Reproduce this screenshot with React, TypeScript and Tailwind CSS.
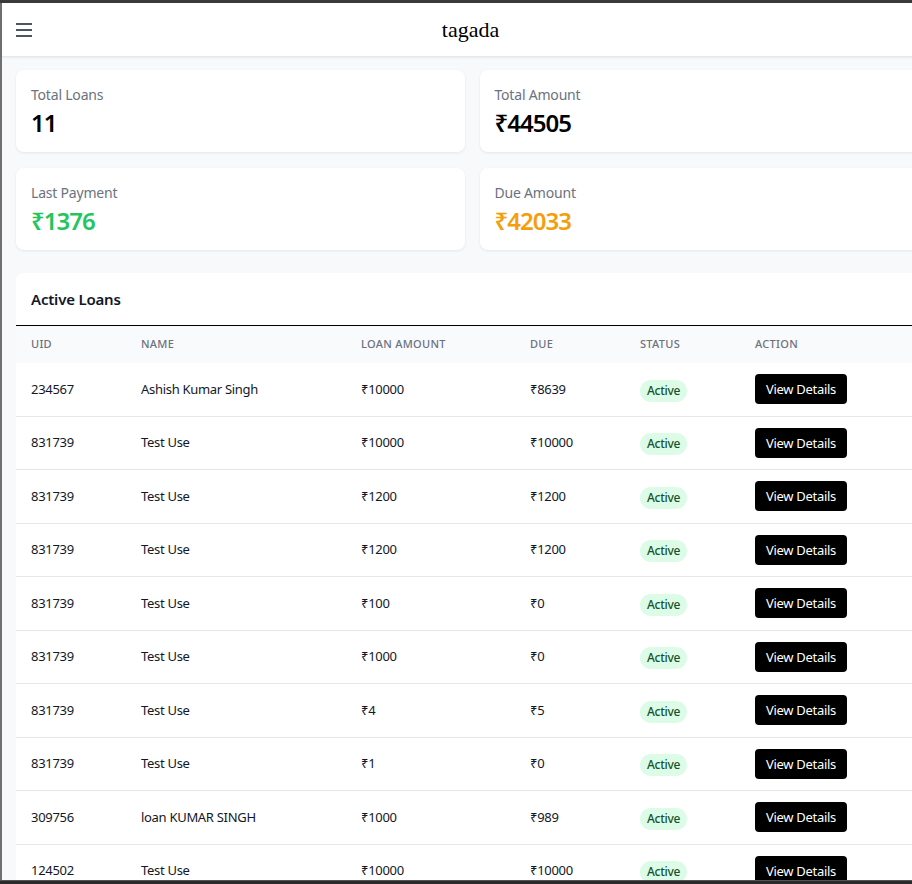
import React from 'react';

type Loan = {
    uid: string;
    name: string;
    amount: string;
    due: string;
};

const loans: Loan[] = [
    { uid: '234567', name: 'Ashish Kumar Singh', amount: '₹10000', due: '₹8639' },
    { uid: '831739', name: 'Test Use', amount: '₹10000', due: '₹10000' },
    { uid: '831739', name: 'Test Use', amount: '₹1200', due: '₹1200' },
    { uid: '831739', name: 'Test Use', amount: '₹1200', due: '₹1200' },
    { uid: '831739', name: 'Test Use', amount: '₹100', due: '₹0' },
    { uid: '831739', name: 'Test Use', amount: '₹1000', due: '₹0' },
    { uid: '831739', name: 'Test Use', amount: '₹4', due: '₹5' },
    { uid: '831739', name: 'Test Use', amount: '₹1', due: '₹0' },
    { uid: '309756', name: 'loan KUMAR SINGH', amount: '₹1000', due: '₹989' },
    { uid: '124502', name: 'Test Use', amount: '₹10000', due: '₹10000' },
];

const stats = [
    { label: 'Total Loans', value: '11', color: 'text-black' },
    { label: 'Total Amount', value: '₹44505', color: 'text-black' },
    { label: 'Last Payment', value: '₹1376', color: 'text-[#22c55e]' },
    { label: 'Due Amount', value: '₹42033', color: 'text-[#f59e0b]' },
];

const cols = 'grid grid-cols-[110px_220px_169px_110px_115px_1fr] pl-[15px] items-center';

const StatCard = ({ label, value, color }: { label: string; value: string; color: string }) => (
    <div className="bg-white rounded-lg shadow-[0_1px_3px_rgba(0,0,0,0.08)] px-[15px] pt-[15px] pb-[13px]">
        <p className="text-[14px] leading-5 text-[#6b7280] tracking-[-0.2px]">{label}</p>
        <p className={`mt-[2px] text-2xl leading-8 font-semibold tracking-[-1px] ${color}`}>{value}</p>
    </div>
);

export default function App() {
    return (
        <div className="w-[912px] h-[884px] overflow-hidden flex flex-col bg-[#3a3a3a] font-['Noto_Sans',sans-serif]">
            <div className="h-[3px] shrink-0 bg-[#3a3a3a]" />
            <div className="flex flex-1 min-h-0 overflow-hidden">
                <div className="w-[2px] shrink-0 bg-[#707070]" />
                <div className="w-[942px] shrink-0 bg-[#f8f9fb] flex flex-col">
                    <header className="h-[54px] shrink-0 bg-white border-b border-[#e5e7eb] shadow-[0_1px_2px_rgba(0,0,0,0.06)] flex items-center">
                        <button className="ml-[14px] w-4 h-4 flex items-center">
                            <svg width="16" height="14" viewBox="0 0 16 14">
                                <rect x="0" y="0" width="16" height="2" fill="#4b5563" />
                                <rect x="0" y="6" width="16" height="2" fill="#4b5563" />
                                <rect x="0" y="12" width="16" height="2" fill="#4b5563" />
                            </svg>
                        </button>
                        <h1 className="flex-1 text-center pr-[35px] text-[22px] text-black font-['Liberation_Serif',serif]">
                            tagada
                        </h1>
                    </header>

                    <main className="pl-[14px] pr-4 pt-[13px]">
                        <div className="grid grid-cols-2 gap-x-[15px] gap-y-4">
                            {stats.map((s) => (
                                <StatCard key={s.label} {...s} />
                            ))}
                        </div>

                        <div className="mt-[23px] bg-white rounded-t-lg">
                            <div className="px-[15px] h-[53px] flex items-center border-b border-black">
                                <h2 className="text-[15px] font-semibold text-[#111827] tracking-[-0.2px]">Active Loans</h2>
                            </div>
                            <div className={`${cols} h-[37px] bg-[#f9fafb] text-[11px] font-medium uppercase tracking-[0.3px] text-[#6b7280]`}>
                                <span>UID</span>
                                <span>Name</span>
                                <span>Loan Amount</span>
                                <span>Due</span>
                                <span>Status</span>
                                <span>Action</span>
                            </div>
                            {loans.map((loan, index) => (
                                <div
                                    key={`loan-${index}`}
                                    className={`${cols} h-[53.5px] border-b border-[#e5e7eb] text-[13px] text-[#111827] tracking-[-0.3px]`}
                                >
                                    <span>{loan.uid}</span>
                                    <span>{loan.name}</span>
                                    <span>{loan.amount}</span>
                                    <span>{loan.due}</span>
                                    <span>
                                        <span className="inline-block mt-[3px] px-[7px] py-[3px] rounded-full bg-[#dcfce7] text-[#14532d] text-[12px] leading-4 font-medium tracking-[-0.3px]">
                                            Active
                                        </span>
                                    </span>
                                    <span>
                                        <button className="bg-black text-white text-[13px] leading-5 px-[11px] h-[30px] rounded tracking-[-0.3px]">
                                            View Details
                                        </button>
                                    </span>
                                </div>
                            ))}
                        </div>
                    </main>
                </div>
            </div>
            <div className="h-[4px] shrink-0 bg-[#2b2b2b] border-t border-[#555]" />
        </div>
    );
}
